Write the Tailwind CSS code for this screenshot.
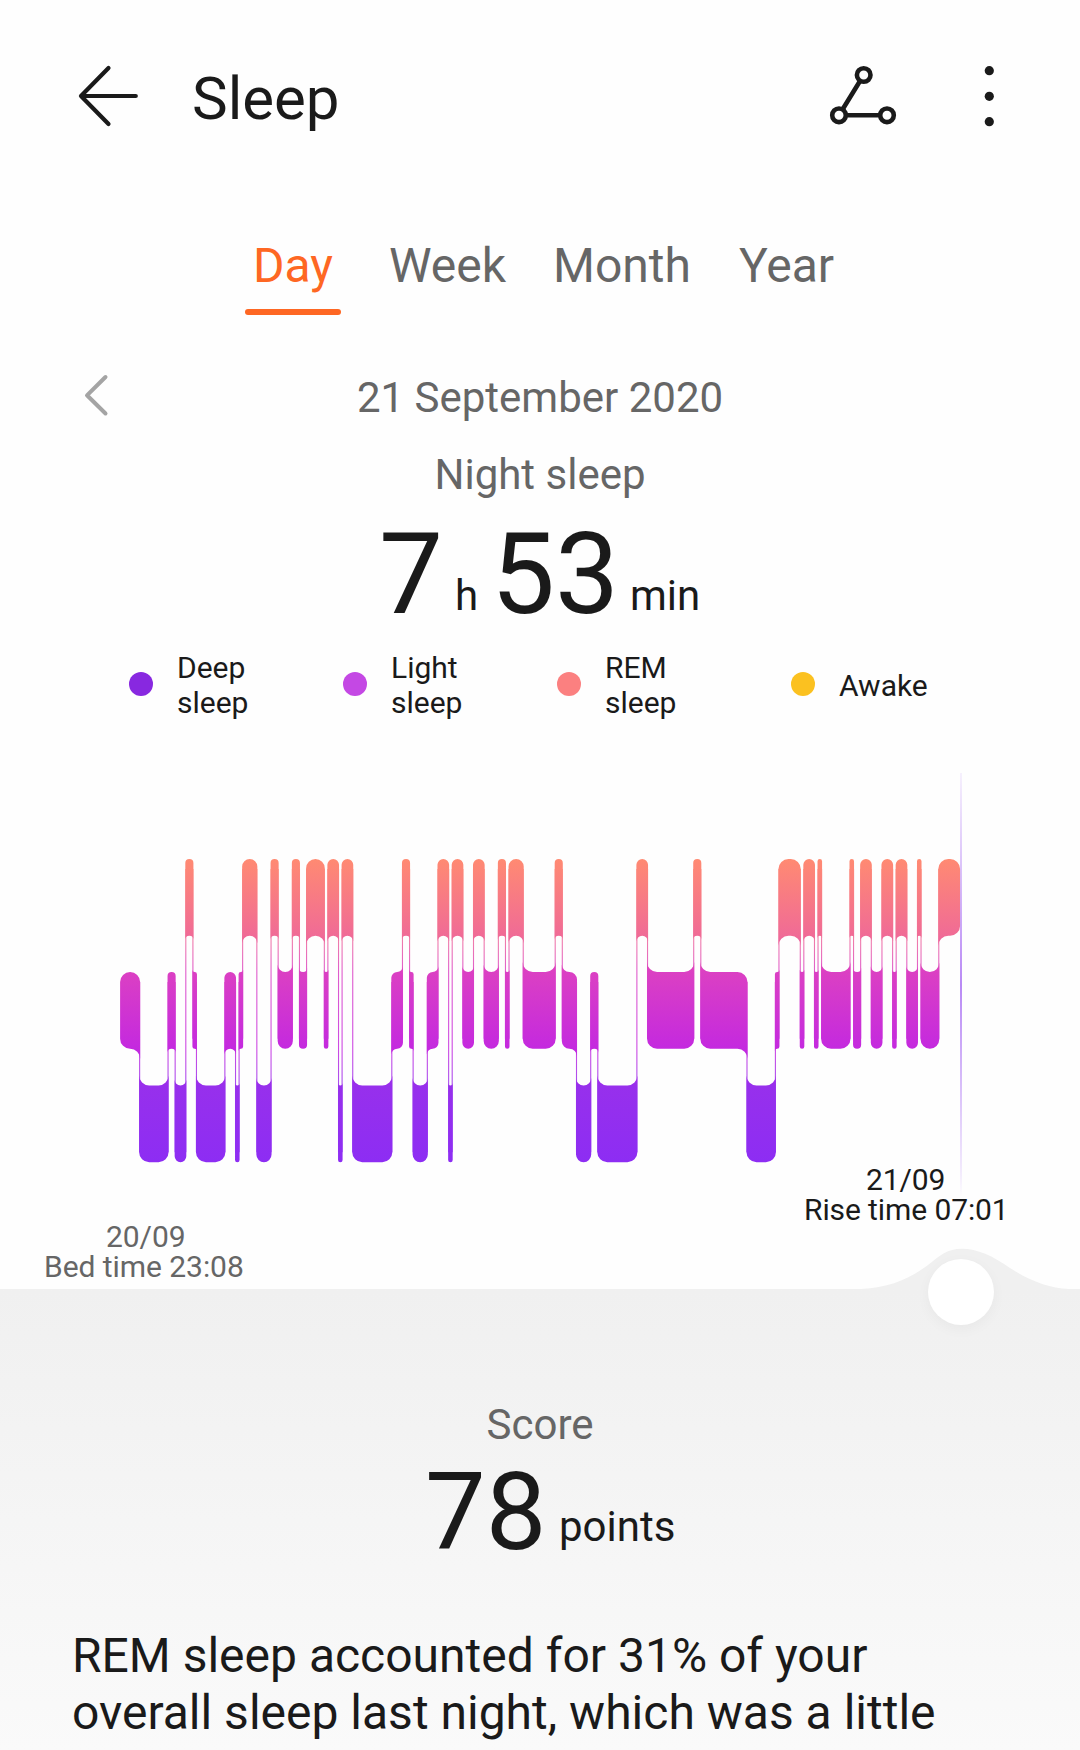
<!DOCTYPE html>
<html lang="en">
<head>
<meta charset="utf-8">
<title>Sleep</title>
<script src="https://cdn.jsdelivr.net/npm/@tailwindcss/browser@4"></script>
</head>
<body class="bg-[#fefefe]">
<div class="relative flex h-[1750px] w-[1080px] flex-col overflow-hidden bg-[#fefefe] font-['Roboto',sans-serif] text-[#1a1a1a]">

  <header class="flex h-[192px] shrink-0 items-center">
    <svg class="ml-[78px] h-[64px] w-[62px] shrink-0" viewBox="0 0 62 64" fill="none" stroke="#1a1a1a" stroke-width="4.2" stroke-linecap="round" stroke-linejoin="round"><path d="M30.5 4 3 32 30.5 60M3 32H57.8"/></svg>
    <h1 class="ml-[52px] pt-[5px] text-[60px] leading-[70px]">Sleep</h1>
    <svg class="mr-[87px] ml-auto h-[64px] w-[68px] shrink-0" viewBox="0 0 68 64" fill="none" stroke="#1a1a1a"><g stroke-width="4.6"><path d="M34.7 11 10 51.3H58"/></g><g stroke-width="4.6" fill="#fefefe"><circle cx="34.7" cy="11" r="6.8"/><circle cx="10" cy="51.3" r="6.8"/><circle cx="58" cy="51.3" r="6.8"/></g></svg>
    <svg class="mr-[86px] h-[64px] w-[10px] shrink-0" viewBox="0 0 10 64" fill="#1a1a1a"><circle cx="5.3" cy="6.7" r="4.6"/><circle cx="5.3" cy="32.3" r="4.6"/><circle cx="5.3" cy="57.7" r="4.6"/></svg>
  </header>

  <nav class="flex h-[150px] shrink-0 items-start pt-[46px] pl-[245px] text-[48px] leading-[56px] text-[#666]">
    <div class="flex w-[96px] flex-col items-center gap-[15px] text-[#fe6723]"><span>Day</span><span class="h-[6px] w-full rounded-full bg-[#fe6723]"></span></div>
    <span class="ml-[48px] w-[164px]">Week</span>
    <span class="w-[186px]">Month</span>
    <span>Year</span>
  </nav>

  <section class="mt-[28px] flex h-[54px] shrink-0 items-center text-[42px] leading-[50px] text-[#666]">
    <svg class="mb-[4px] ml-[82px] h-[44px] w-[28px]" viewBox="0 0 28 44" fill="none" stroke="#a4a4a4" stroke-width="4" stroke-linecap="round" stroke-linejoin="round"><path d="M23.5 4 5 22.3 23.5 40.5"/></svg>
    <span class="flex-1 pt-[2px] pr-[110px] text-center">21 September 2020</span>
  </section>
  <p class="mt-[26px] h-[50px] shrink-0 text-center text-[42px] leading-[50px] text-[#666]">Night sleep</p>

  <div class="mt-[17px] flex h-[114px] shrink-0 items-end pl-[379px] leading-none">
    <span class="w-[76px] text-[114px]">7</span>
    <span class="w-[36px] pb-[14px] text-[42px]">h</span>
    <span class="w-[139px] text-[114px]">53</span>
    <span class="pb-[14px] text-[42px]">min</span>
  </div>

  <ul class="mt-[18px] flex h-[70px] shrink-0 items-center pl-[129px] text-[30px] leading-[35px]">
    <li class="flex w-[214px] items-center gap-[24px]"><i class="size-6 rounded-full bg-[#8828e0]"></i><span class="pt-[2px]">Deep<br>sleep</span></li>
    <li class="flex w-[214px] items-center gap-[24px]"><i class="size-6 rounded-full bg-[#c448e4]"></i><span class="pt-[2px]">Light<br>sleep</span></li>
    <li class="flex w-[234px] items-center gap-[24px]"><i class="size-6 rounded-full bg-[#fb8080]"></i><span class="pt-[2px]">REM<br>sleep</span></li>
    <li class="flex items-center gap-[24px]"><i class="size-6 rounded-full bg-[#fbc120]"></i><span class="pt-[2px]">Awake</span></li>
  </ul>

  <section class="relative h-[570px] shrink-0">
    <svg class="block h-[570px] w-[1080px]" viewBox="0 719 1080 570">
      <defs>
        <linearGradient id="stage" gradientUnits="userSpaceOnUse" x1="0" y1="859" x2="0" y2="1162">
          <stop offset="0" stop-color="#ff8a72"/><stop offset=".253" stop-color="#f06b96"/>
          <stop offset=".373" stop-color="#db40c3"/><stop offset=".627" stop-color="#c429df"/>
          <stop offset=".75" stop-color="#9730ec"/><stop offset="1" stop-color="#8d2df3"/>
        </linearGradient>
        <linearGradient id="cursor" x1="0" y1="0" x2="0" y2="1">
          <stop offset="0" stop-color="#b98af5" stop-opacity=".12"/><stop offset=".5" stop-color="#b98af5"/><stop offset=".95" stop-color="#b98af5" stop-opacity=".15"/><stop offset="1" stop-color="#b98af5" stop-opacity="0"/>
        </linearGradient>
      </defs>
      <path id="stage-links" fill="none" stroke="url(#stage)" stroke-width="1.1" stroke-opacity=".85"/>
      <path id="stage-blocks" fill="url(#stage)"/>
      <rect x="960" y="773" width="2" height="424" fill="url(#cursor)"/>
    </svg>
    <div class="absolute top-[446px] left-[804px] w-[202px] text-[30px] leading-[30px] tracking-[-0.1px] whitespace-nowrap"><p class="pl-[62px]">21/09</p><p>Rise time 07:01</p></div>
    <div class="absolute top-[503px] left-[44px] w-[202px] text-[30px] leading-[30px] tracking-[-0.05px] whitespace-nowrap text-[#666]"><p class="pl-[62px]">20/09</p><p>Bed time 23:08</p></div>
  </section>

  <section class="relative flex flex-1 flex-col bg-linear-to-b from-[#f0f0f0] to-[#fafafa]">
    <svg class="absolute bottom-full left-[855px] h-[41px] w-[220px]" viewBox="0 0 220 41" fill="#f0f0f0"><path d="M6 41C34 39.500 52 32 71 18.500C86 7 92 .8 107 .8C122 .8 138 8 155 20C177 34 194 39.500 214 41Z"/></svg>
    <div class="absolute top-[-30px] left-[928px] size-[66px] rounded-full bg-white shadow-[0_4px_14px_rgba(0,0,0,0.04)]"></div>
    <p class="mt-[111px] h-[50px] text-center text-[42px] leading-[50px] text-[#666]">Score</p>
    <div class="mt-[8px] flex h-[108px] items-end pl-[425px] leading-none">
      <span class="w-[134px] text-[108px]">78</span>
      <span class="pb-[18px] text-[42px]">points</span>
    </div>
    <p class="mt-[61px] h-[114px] pl-[72px] text-[48px] leading-[57px] whitespace-nowrap">REM sleep accounted for 31% of your<br>overall sleep last night, which was a little</p>
  </section>
</div>

<script>
(() => {
  // Sleep stages in order: R = REM, L = light, D = deep, followed by minutes.
  const stages = 'L11 D16 L4 D6 R4 L2 D16 L6 D2 L2 R8 D8 R4 L8 R4 L4 R10 L2 R6 D2 R6 D22 L6 R4 L2 D8 L6 R6 D2 R6 L6 R6 L8 R4 L2 R8 L18 R4 L8 D8 L4 D22 R6 L26 R4 L26 D16 L2 R12 L2 R6 L2 R2 L16 R2 L4 R6 L6 R6 L2 R6 L6 R2 L10 R12'
    .split(' ').map(s => ({ level: 'RLD'.indexOf(s[0]), min: +s.slice(1) }));
  const tops = [859, 972, 1085.5], H = 76.7, left = 120.1;
  const total = stages.reduce((a, s) => a + s.min, 0), px = 840 / total;
  let x = left, blocks = '', links = '';
  stages.forEach((s, i) => {
    const w = s.min * px, prev = stages[i - 1], next = stages[i + 1];
    const a = x - (prev ? .5 : 0), b = x + w + (next ? .5 : 0), t = tops[s.level], u = t + H;
    const r = Math.min(10, (b - a) / 2);
    const lUp = prev && prev.level < s.level, lDn = prev && prev.level > s.level;
    const rUp = next && next.level < s.level, rDn = next && next.level > s.level;
    const corner = (convex, ex, ey) => `A${r} ${r} 0 0 ${convex ? 1 : 0} ${ex} ${ey}`;
    blocks += `M${a} ${lUp ? t - r : t + r}` + corner(!lUp, a + r, t)
      + `L${b - r} ${t}` + corner(!rUp, b, rUp ? t - r : t + r)
      + `L${b} ${rDn ? u + r : u - r}` + corner(!rDn, b - r, u)
      + `L${a + r} ${u}` + corner(!lDn, a, lDn ? u + r : u - r) + 'Z';
    x += w;
    if (next) links += `M${x} ${Math.min(t, tops[next.level]) + 10}V${Math.max(t, tops[next.level]) + H - 10}`;
  });
  document.getElementById('stage-blocks').setAttribute('d', blocks);
  document.getElementById('stage-links').setAttribute('d', links);
})();
</script>
</body>
</html>
